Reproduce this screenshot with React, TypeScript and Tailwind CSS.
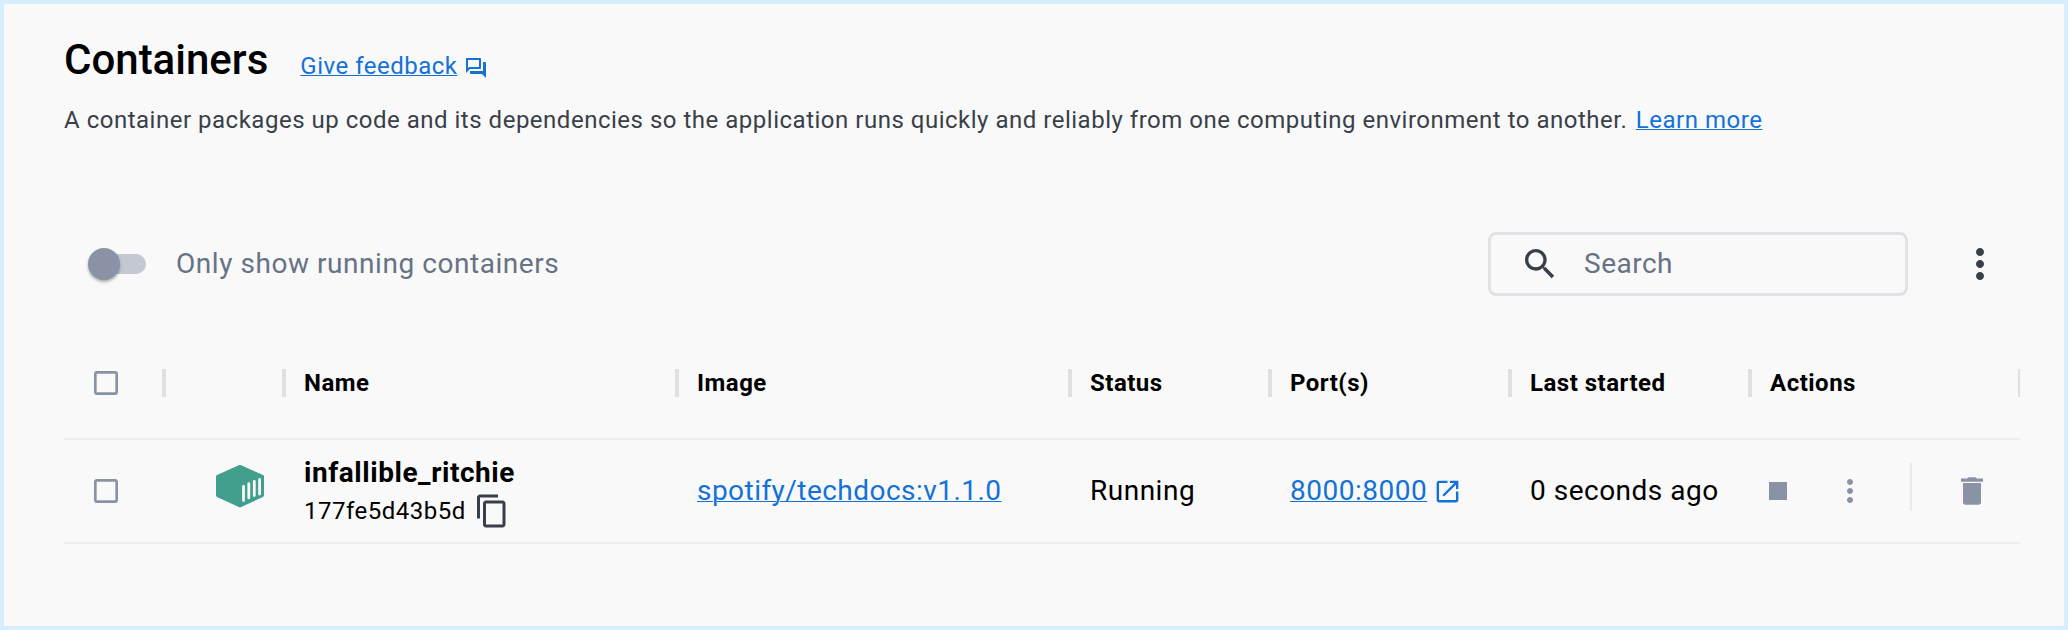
import React from "react";

type IconProps = { className?: string; d: string };

function Icon({ className, d }: IconProps) {
  return (
    <svg viewBox="0 0 24 24" fill="currentColor" className={`block shrink-0 ${className ?? ""}`} aria-hidden="true">
      <path d={d} />
    </svg>
  );
}

const icons = {
  forum: "M15 4v7H5.17L4 12.17V4h11m1-2H3c-.55 0-1 .45-1 1v14l4-4h10c.55 0 1-.45 1-1V3c0-.55-.45-1-1-1zm5 4h-2v9H6v2c0 .55.45 1 1 1h11l4 4V7c0-.55-.45-1-1-1z",
  search: "M15.5 14h-.79l-.28-.27C15.41 12.59 16 11.11 16 9.5 16 5.91 13.09 3 9.5 3S3 5.91 3 9.5 5.91 16 9.5 16c1.61 0 3.09-.59 4.23-1.57l.27.28v.79l5 4.99L20.49 19l-4.99-5zm-6 0C7.01 14 5 11.99 5 9.5S7.01 5 9.5 5 14 7.01 14 9.5 11.99 14 9.5 14z",
  more: "M12 8c1.1 0 2-.9 2-2s-.9-2-2-2-2 .9-2 2 .9 2 2 2zm0 2c-1.1 0-2 .9-2 2s.9 2 2 2 2-.9 2-2-.9-2-2-2zm0 6c-1.1 0-2 .9-2 2s.9 2 2 2 2-.9 2-2-.9-2-2-2z",
  box: "M19 5v14H5V5h14m0-2H5c-1.1 0-2 .9-2 2v14c0 1.1.9 2 2 2h14c1.1 0 2-.9 2-2V5c0-1.1-.9-2-2-2z",
  copy: "M16 1H4c-1.1 0-2 .9-2 2v14h2V3h12V1zm3 4H8c-1.1 0-2 .9-2 2v14c0 1.1.9 2 2 2h11c1.1 0 2-.9 2-2V7c0-1.1-.9-2-2-2zm0 16H8V7h11v14z",
  open: "M19 19H5V5h7V3H5c-1.11 0-2 .9-2 2v14c0 1.1.89 2 2 2h14c1.1 0 2-.9 2-2v-7h-2v7zM14 3v2h3.59l-9.83 9.83 1.41 1.41L19 6.41V10h2V3h-7z",
  stop: "M6 6h12v12H6z",
};

const cols = "grid grid-cols-[100px_120px_393px_393px_200px_240px_240px_270px]";
const link = "text-[#1371d8] underline decoration-1 underline-offset-1";

function HeadCell({ label, last }: { label?: string; last?: boolean }) {
  return (
    <div className={`flex items-center justify-between pl-5 ${last ? "" : "-mr-0.5"}`}>
      <span className="text-2xl font-bold tracking-[0.5px]">{label}</span>
      <span className={`h-7 bg-[#e0e0e0] ${last ? "w-0.5" : "w-1"}`} />
    </div>
  );
}

function ContainerIcon() {
  return (
    <svg viewBox="0 0 48 43" className="block h-[43px] w-12 shrink-0" aria-hidden="true">
      <path
        d="M22.8.3a3 3 0 0 1 2.4 0L47 10a1.6 1.6 0 0 1 1 1.4v19.2a1.6 1.6 0 0 1-1 1.4l-21.8 9.9a3 3 0 0 1-2.4 0L1 32a1.6 1.6 0 0 1-1-1.4V11.4A1.6 1.6 0 0 1 1 10z"
        fill="#419f8d"
      />
      <path
        d="M27.5 21.4v14.2M32.8 18.7v14.2M38.3 16.3v14.2M43.6 14.5v14.6"
        stroke="#f9f9f9"
        strokeWidth="2.8"
        strokeLinecap="round"
      />
    </svg>
  );
}

function TrashIcon({ className }: { className?: string }) {
  return (
    <svg viewBox="0 0 36 36" fill="currentColor" className={`block shrink-0 ${className ?? ""}`} aria-hidden="true">
      <path d="M7 5.6h6.2l1.3-1.4h7l1.3 1.4H29v3.2H7zM9 10h18v19a2.7 2.7 0 0 1-2.7 2.7H11.7A2.7 2.7 0 0 1 9 29z" />
    </svg>
  );
}

export default function App() {
  return (
    <div className="h-[630px] w-[2068px] overflow-hidden border-4 border-[#d5edfd] bg-[#f9f9f9] pr-11 pl-15 font-[Roboto,sans-serif] text-black">
      <header className="pt-8">
        <div className="flex items-baseline">
          <h1 className="text-[42px] leading-[48px] font-medium">Containers</h1>
          <a className={`ml-8 text-2xl tracking-[0.5px] ${link}`}>Give feedback</a>
          <Icon d={icons.forum} className="ml-[7px] size-6 translate-y-1.5 text-[#1371d8]" />
        </div>
        <p className="mt-5 text-2xl leading-8 tracking-[0.51px] whitespace-nowrap text-[#393f49]">
          A container packages up code and its dependencies so the application runs quickly and reliably from one computing environment to another.{" "}
          <a className={`ml-0.5 ${link}`}>Learn more</a>
        </p>
      </header>

      <div className="mt-24 flex h-16 items-center">
        <div className="ml-6 flex h-8 w-[58px] items-center">
          <span className="z-10 size-8 shrink-0 rounded-full bg-[#8993a5] shadow-[0_2px_3px_rgba(0,0,0,0.3)]" />
          <span className="-ml-7 h-5 w-[54px] shrink-0 rounded-full bg-[#c4c8d1]" />
        </div>
        <span className="ml-[30px] text-[28px] tracking-[0.55px] text-[#677285]">Only show running containers</span>
        <div className="ml-auto flex h-16 w-[420px] items-center rounded-lg border-3 border-[#e1e2e6] pl-[29px]">
          <Icon d={icons.search} className="size-10 text-[#393f49]" />
          <span className="ml-6 text-[28px] tracking-[0.5px] text-[#677285]">Search</span>
        </div>
        <Icon d={icons.more} className="mr-4 ml-12 size-12 text-[#393f49]" />
      </div>

      <div className="mt-[30px] w-[1956px]">
        <div className={`${cols} h-[114px] border-b-2 border-[#eee] pt-0.5`}>
          <div className="-mr-0.5 flex items-center justify-between pl-[26px]">
            <Icon d={icons.box} className="size-8 text-[#8993a5]" />
            <span className="h-7 w-1 bg-[#e0e0e0]" />
          </div>
          <HeadCell />
          <HeadCell label="Name" />
          <HeadCell label="Image" />
          <HeadCell label="Status" />
          <HeadCell label="Port(s)" />
          <HeadCell label="Last started" />
          <HeadCell label="Actions" last />
        </div>
        <div className={`${cols} h-[104px] items-center border-b-2 border-[#eee] text-[28px] tracking-[0.5px]`}>
          <Icon d={icons.box} className="ml-[26px] size-8 text-[#8993a5]" />
          <div className="-mt-[9px] pl-[52px]">
            <ContainerIcon />
          </div>
          <div className="pt-0.5 pl-5">
            <div className="leading-9 font-bold tracking-[0.55px]">infallible_ritchie</div>
            <div className="mt-0.5 flex h-9 items-center">
              <span className="text-2xl">177fe5d43b5d</span>
              <Icon d={icons.copy} className="ml-2 size-9 text-[#393f49]" />
            </div>
          </div>
          <span className="pl-5 tracking-[0.46px]">
            <a className={link}>spotify/techdocs:v1.1.0</a>
          </span>
          <span className="pl-5">Running</span>
          <span className="flex items-center pl-5 text-[#1371d8]">
            <a className={link}>8000:8000</a>
            <Icon d={icons.open} className="ml-1.5 size-[29px]" />
          </span>
          <span className="pl-5">0 seconds ago</span>
          <div className="flex items-center pl-2.5 text-[#8993a5]">
            <Icon d={icons.stop} className="size-9" />
            <Icon d={icons.more} className="ml-9 size-9" />
            <span className="-mt-2 ml-[42px] h-12 w-0.5 bg-[#eaeaea]" />
            <TrashIcon className="ml-[42px] size-9" />
          </div>
        </div>
      </div>
    </div>
  );
}
